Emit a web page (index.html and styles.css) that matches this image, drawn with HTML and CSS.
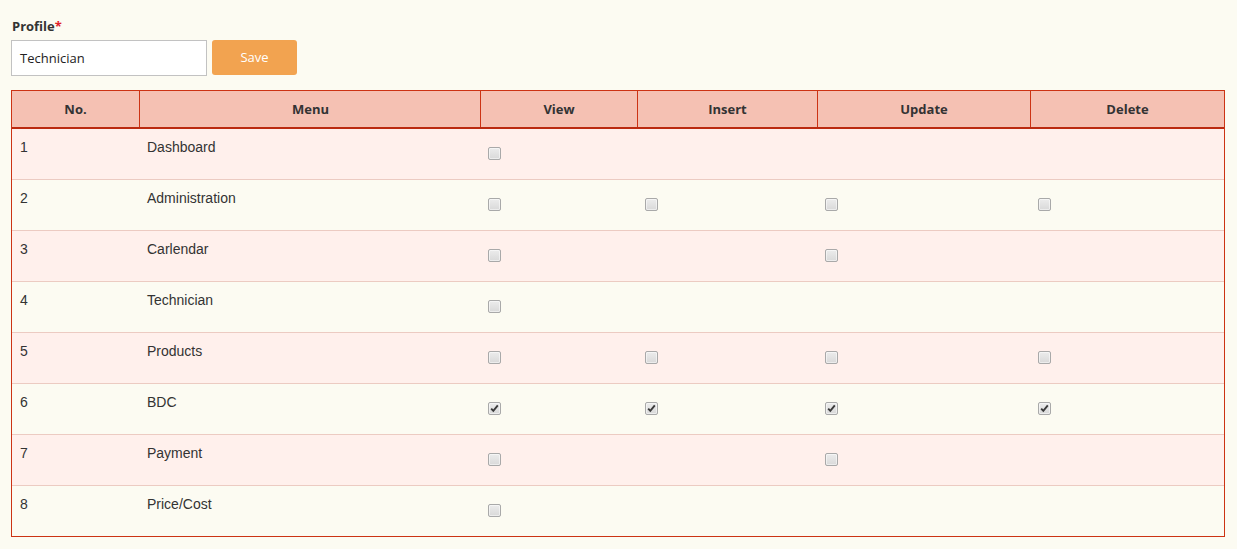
FILE: index.html
```html
<!DOCTYPE html>
<html>
<head>
<meta charset="utf-8">
<link rel="stylesheet" href="styles.css">
</head>
<body>
<div class="page">
  <div class="form-label">Profile<span class="req">*</span></div>
  <div class="form-row">
    <div class="text-input">Technician</div>
    <div class="btn-save">Save</div>
  </div>
  <div class="grid-table">
    <div class="row head">
      <div class="cell">No.</div>
      <div class="cell">Menu</div>
      <div class="cell">View</div>
      <div class="cell">Insert</div>
      <div class="cell">Update</div>
      <div class="cell">Delete</div>
    </div>
    <div class="row odd">
      <div class="cell">1</div><div class="cell">Dashboard</div>
      <div class="cell"><span class="cb"></span></div><div class="cell"></div><div class="cell"></div><div class="cell"></div>
    </div>
    <div class="row">
      <div class="cell">2</div><div class="cell">Administration</div>
      <div class="cell"><span class="cb"></span></div><div class="cell"><span class="cb"></span></div><div class="cell"><span class="cb"></span></div><div class="cell"><span class="cb"></span></div>
    </div>
    <div class="row odd">
      <div class="cell">3</div><div class="cell">Carlendar</div>
      <div class="cell"><span class="cb"></span></div><div class="cell"></div><div class="cell"><span class="cb"></span></div><div class="cell"></div>
    </div>
    <div class="row">
      <div class="cell">4</div><div class="cell">Technician</div>
      <div class="cell"><span class="cb"></span></div><div class="cell"></div><div class="cell"></div><div class="cell"></div>
    </div>
    <div class="row odd">
      <div class="cell">5</div><div class="cell">Products</div>
      <div class="cell"><span class="cb"></span></div><div class="cell"><span class="cb"></span></div><div class="cell"><span class="cb"></span></div><div class="cell"><span class="cb"></span></div>
    </div>
    <div class="row">
      <div class="cell">6</div><div class="cell">BDC</div>
      <div class="cell"><span class="cb"><svg viewBox="0 0 11 11" width="11" height="11"><path d="M2.2 5.6 L4.3 7.8 L8.8 2.4" fill="none" stroke="#3a3a3a" stroke-width="1.9"/></svg></span></div>
      <div class="cell"><span class="cb"><svg viewBox="0 0 11 11" width="11" height="11"><path d="M2.2 5.6 L4.3 7.8 L8.8 2.4" fill="none" stroke="#3a3a3a" stroke-width="1.9"/></svg></span></div>
      <div class="cell"><span class="cb"><svg viewBox="0 0 11 11" width="11" height="11"><path d="M2.2 5.6 L4.3 7.8 L8.8 2.4" fill="none" stroke="#3a3a3a" stroke-width="1.9"/></svg></span></div>
      <div class="cell"><span class="cb"><svg viewBox="0 0 11 11" width="11" height="11"><path d="M2.2 5.6 L4.3 7.8 L8.8 2.4" fill="none" stroke="#3a3a3a" stroke-width="1.9"/></svg></span></div>
    </div>
    <div class="row odd">
      <div class="cell">7</div><div class="cell">Payment</div>
      <div class="cell"><span class="cb"></span></div><div class="cell"></div><div class="cell"><span class="cb"></span></div><div class="cell"></div>
    </div>
    <div class="row">
      <div class="cell">8</div><div class="cell">Price/Cost</div>
      <div class="cell"><span class="cb"></span></div><div class="cell"></div><div class="cell"></div><div class="cell"></div>
    </div>
  </div>
</div>
</body>
</html>
```
FILE: styles.css
```css
* { box-sizing: border-box; }
html, body { margin: 0; padding: 0; background: #fcfbf2; }
.page {
  padding: 17px 12px 0 11px;
  font-family: "Open Sans", "DejaVu Sans", sans-serif;
  color: #333;
}
.form-label {
  font-size: 13px;
  font-weight: 700;
  line-height: 18px;
  color: #333;
  padding-left: 1px;
}
.req { color: #e0202a; }
.form-row {
  display: flex;
  gap: 5px;
  margin-top: 5px;
}
.text-input {
  width: 196px;
  height: 36px;
  border: 1px solid #c2c2c2;
  background: #fff;
  padding: 0 8px;
  font-size: 13px;
  line-height: 34px;
  color: #222;
}
.btn-save {
  width: 85px;
  height: 35px;
  border-radius: 3px;
  background: #f2a350;
  color: #fff;
  font-size: 13px;
  line-height: 35px;
  text-align: center;
}
.grid-table {
  margin-top: 14px;
  width: 1214px;
  border: 1px solid #cc3314;
  border-top-color: #cc3314;
}
.row {
  display: grid;
  grid-template-columns: 127px 341px 157px 180px 213px 194px;
  height: 51px;
  border-top: 1px solid #eccbc2;
  background: #fcfbf2;
}
.row.odd { background: #fff0ec; }
.row.head + .row { border-top: 0; height: 50px; }
.row.head {
  height: 38px;
  border-top: 0;
  background: #f5c1b3;
  border-bottom: 2px solid #bb2a10;
}
.row.head .cell {
  font-family: "Open Sans", "DejaVu Sans", sans-serif;
  font-weight: 700;
  font-size: 13px;
  line-height: 36px;
  text-align: center;
  padding: 0;
  color: #333;
}
.row.head .cell + .cell { border-left: 1px solid #cc3314; }
.row.head .cell:nth-child(2) { padding-left: 1px; }
.cell {
  padding: 8px 8px 0 8px;
  font-family: "Liberation Sans", Arial, sans-serif;
  font-size: 14px;
  line-height: 20px;
  color: #333;
}
.cb {
  display: block;
  width: 13px;
  height: 13px;
  margin-top: 10px;
  border: 1px solid #a9a9a9;
  border-radius: 2px;
  background: linear-gradient(#ececec, #d9d9d9);
  box-shadow: inset 0 0 0 1px rgba(255,255,255,0.5);
}
.cb svg { display: block; }
```
